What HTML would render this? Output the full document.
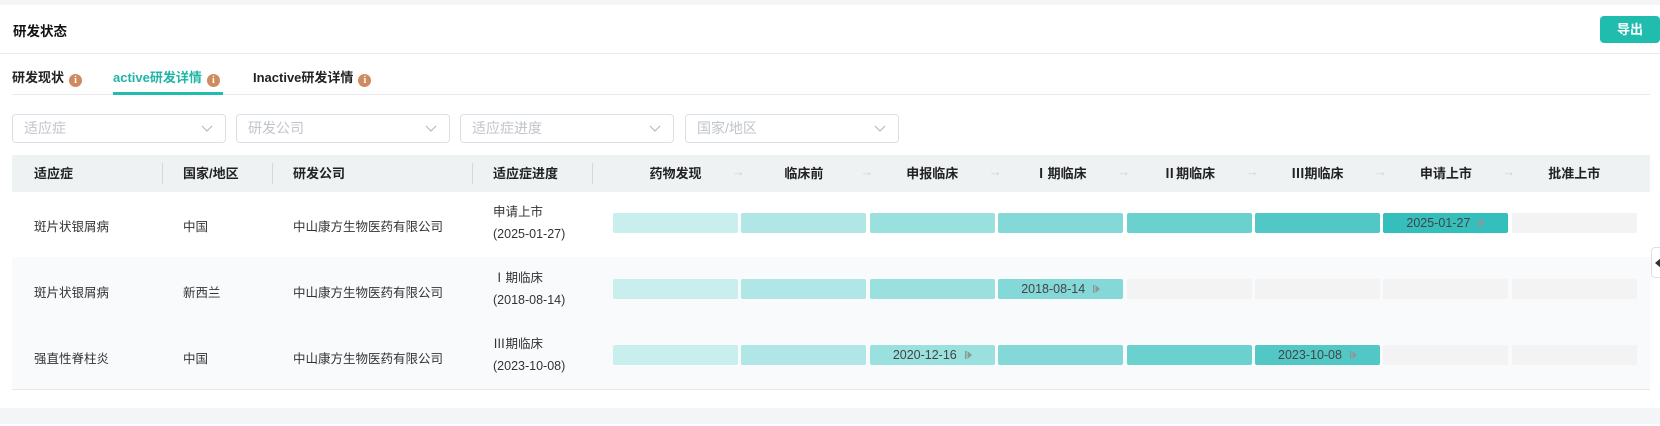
<!DOCTYPE html>
<html><head><meta charset="utf-8"><style>
*{margin:0;padding:0;box-sizing:border-box}
body{width:1660px;height:426px;background:#fff;font-family:"Liberation Sans","Noto Sans CJK SC",sans-serif;color:#333;position:relative;overflow:hidden;font-size:13px}
.a{position:absolute}
.info{display:inline-block;width:13px;height:13px;border-radius:50%;background:#cf8a60;color:#fff;font-size:10px;font-weight:bold;text-align:center;line-height:13px;vertical-align:-1px;margin-left:5px;font-family:"Liberation Serif",serif}
.sel{position:absolute;top:114px;height:29px;border:1px solid #dcdfe6;border-radius:4px;color:#c0c4cc;font-size:14px;line-height:27px;padding-left:11px}
.sel svg{position:absolute;right:12px;top:10px}
.hd{position:absolute;top:155px;height:37px;line-height:37px;font-weight:bold;font-size:13px;color:#222}
.sep{position:absolute;top:163px;width:1px;height:21px;background:#d4d8db}
.bar{position:absolute;height:20px;border-radius:2px;font-size:12.5px;color:#444;text-align:center;line-height:20px;white-space:nowrap}
.bar svg{display:inline-block;vertical-align:-1px;margin-left:8px}
.tx{position:absolute;font-size:12.5px;color:#333}
</style></head><body>
<div class="a" style="left:0;top:0;width:1660px;height:5px;background:#f4f5f7"></div>
<div class="a" style="left:13px;top:20px;font-size:13.5px;font-weight:bold;color:#111">研发状态</div>
<div class="a" style="left:1600px;top:16px;width:60px;height:27px;background:#20bdae;border-radius:4px;color:#fff;font-size:13px;font-weight:bold;text-align:center;line-height:27px">导出</div>
<div class="a" style="left:0;top:53px;width:1660px;height:1px;background:#e8e9ee"></div>
<div class="a" style="left:12px;top:67px;font-weight:bold;color:#222">研发现状<span class="info">i</span></div>
<div class="a" style="left:113px;top:67px;font-weight:bold;color:#20b5a6">active研发详情<span class="info">i</span></div>
<div class="a" style="left:253px;top:67px;font-weight:bold;color:#222">Inactive研发详情<span class="info">i</span></div>
<div class="a" style="left:12px;top:94px;width:1638px;height:1px;background:#e8e9ee"></div>
<div class="a" style="left:113px;top:92px;width:110px;height:3px;background:#20bdae"></div>
<div class="sel" style="left:12px;width:214px">适应症<svg width="12" height="8"><path d="M1 1l5 5 5-5" stroke="#b0b4ba" fill="none"/></svg></div>
<div class="sel" style="left:236px;width:214px">研发公司<svg width="12" height="8"><path d="M1 1l5 5 5-5" stroke="#b0b4ba" fill="none"/></svg></div>
<div class="sel" style="left:460px;width:214px">适应症进度<svg width="12" height="8"><path d="M1 1l5 5 5-5" stroke="#b0b4ba" fill="none"/></svg></div>
<div class="sel" style="left:685px;width:214px">国家/地区<svg width="12" height="8"><path d="M1 1l5 5 5-5" stroke="#b0b4ba" fill="none"/></svg></div>
<div class="a" style="left:12px;top:155px;width:1638px;height:37px;background:#eef2f3"></div>
<div class="hd" style="left:34px">适应症</div>
<div class="hd" style="left:183px">国家/地区</div>
<div class="hd" style="left:293px">研发公司</div>
<div class="hd" style="left:493px">适应症进度</div>
<div class="sep" style="left:162px"></div><div class="sep" style="left:272px"></div><div class="sep" style="left:472px"></div><div class="sep" style="left:592px"></div>
<div class="a" style="left:12px;top:257px;width:1638px;height:66px;background:#f9fafb"></div>
<div class="a" style="left:12px;top:323px;width:1638px;height:66px;background:#f9fafb"></div>
<div class="a" style="left:12px;top:389px;width:1638px;height:1px;background:#e6e8eb"></div>
<div class="a" style="left:0;top:408px;width:1660px;height:16px;background:#f4f5f7"></div>
<div class="a" style="left:1651px;top:247px;width:12px;height:31px;background:#fff;border:1px solid #e0e0e0;border-radius:4px 0 0 4px"><div style="position:absolute;left:3px;top:10px;width:0;height:0;border-top:5px solid transparent;border-bottom:5px solid transparent;border-right:6px solid #333"></div></div>
<div id="g"></div>
<script>
var S=["药物发现","临床前","申报临床","Ⅰ期临床","Ⅱ期临床","Ⅲ期临床","申请上市","批准上市"];
var C=["#c8eeee","#b0e6e6","#9ae0df","#84d9d8","#6bd1cf","#52c8c6","#35bfbc"];
var rows=[["斑片状银屑病","中国","申请上市","(2025-01-27)",6,"2025-01-27",[]],["斑片状银屑病","新西兰","Ⅰ期临床","(2018-08-14)",3,"2018-08-14",[]],["强直性脊柱炎","中国","Ⅲ期临床","(2023-10-08)",5,"2023-10-08",[[2,"2020-12-16"]]]];
var h="",x0=613,st=128.4,w=125;
var mk='<svg width="7" height="10"><rect x="0" y="1" width="1.5" height="8" fill="#8a9a9a"/><path d="M2.5 1l4.5 4-4.5 4z" fill="#8a9a9a"/></svg>';
S.forEach(function(s,i){var x=x0+i*st;h+='<div class="hd" style="left:'+x+'px;width:'+w+'px;text-align:center">'+s+'</div>';if(i<7)h+='<div class="a" style="left:'+(x+w-6)+'px;top:164px;color:#cdd2d5;font-size:13px">→</div>';});
rows.forEach(function(r,k){var y=192+k*66;
h+='<div class="tx" style="left:34px;top:'+(y+24)+'px">'+r[0]+'</div><div class="tx" style="left:183px;top:'+(y+24)+'px">'+r[1]+'</div><div class="tx" style="left:293px;top:'+(y+24)+'px">中山康方生物医药有限公司</div>';
h+='<div class="tx" style="left:493px;top:'+(y+9)+'px;line-height:22px">'+r[2]+'<br>'+r[3]+'</div>';
for(var i=0;i<8;i++){var x=x0+i*st,bg=i<=r[4]?C[i]:"#f3f3f3",t="";
if(i==r[4])t=r[5];r[6].forEach(function(m){if(m[0]==i)t=m[1]});
if(t)t=t+mk;
h+='<div class="bar" style="left:'+x+'px;top:'+(y+21)+'px;width:'+w+'px;background:'+bg+'">'+t+'</div>';}
});
document.getElementById("g").innerHTML=h;
</script>
</body></html>
